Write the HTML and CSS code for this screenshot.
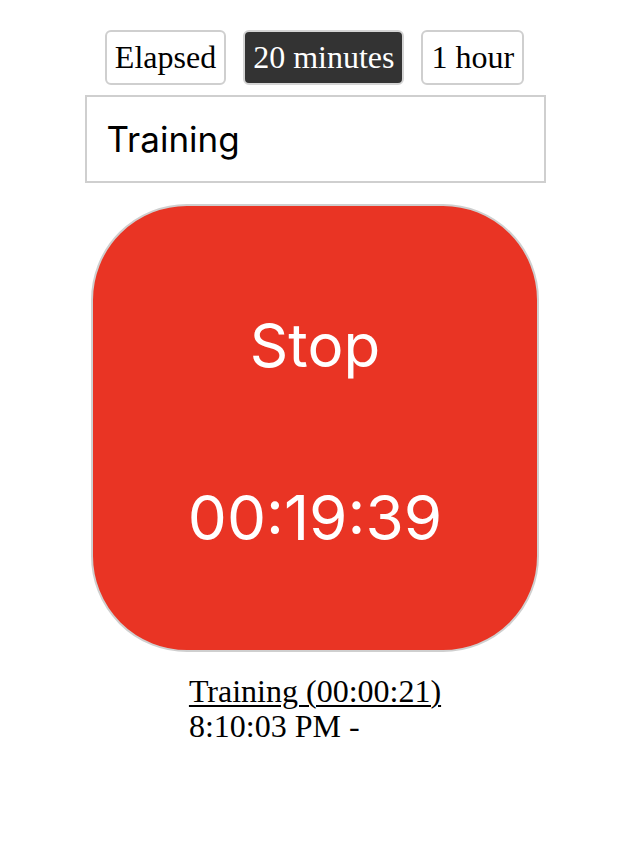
FILE: index.html
```html
<!DOCTYPE html>
<html>
<head>
<meta charset="utf-8">
<link rel="stylesheet" href="styles.css">
</head>
<body>
<div class="app">
  <div class="modes">
    <button class="mode">Elapsed</button>
    <button class="mode active">20 minutes</button>
    <button class="mode">1 hour</button>
  </div>
  <input class="task" type="text" value="Training">
  <button class="timer">
    <span class="label">Stop</span>
    <span class="clock">00:19:39</span>
  </button>
  <div class="log">
    <a class="entry" href="#">Training (00:00:21)</a>
    <div class="when">8:10:03 PM -</div>
  </div>
</div>
</body>
</html>
```
FILE: styles.css
```css
html, body {
  margin: 0;
  padding: 0;
  background: #fff;
}
.app {
  display: flex;
  flex-direction: column;
  align-items: center;
  padding-top: 30px;
  font-family: "Liberation Serif", serif;
  font-size: 32px;
  color: #000;
}
.modes {
  display: flex;
  gap: 17px;
  margin-left: -1px;
}
.mode {
  font-family: "Liberation Serif", serif;
  font-size: 32px;
  line-height: 35px;
  padding: 8px 8px;
  border: 2px solid #cfcfcf;
  border-radius: 6px;
  background: #fff;
  color: #000;
}
.mode.active {
  background: #333;
  color: #fff;
  border-color: #d4d4d4;
}
.task {
  box-sizing: border-box;
  width: 461px;
  height: 88px;
  margin-top: 10px;
  padding: 0 20px;
  border: 2px solid #cfcfcf;
  font-family: "Inter", "Liberation Sans", sans-serif;
  font-size: 35px;
  color: #000;
  outline: none;
}
.timer {
  box-sizing: border-box;
  width: 448px;
  height: 448px;
  margin-top: 21px;
  border: 2px solid #cfcfcf;
  border-radius: 96px;
  background: #e93424;
  color: #fff;
  display: flex;
  flex-direction: column;
  align-items: center;
  justify-content: flex-start;
  padding: 107px 0 0;
  gap: 109px;
  font-family: "Inter", "Liberation Sans", sans-serif;
}
.label, .clock {
  display: block;
  font-size: 60px;
  line-height: 64px;
}
.clock {
  font-size: 62px;
}
.log {
  margin-top: 22px;
  line-height: 35px;
  text-align: left;
}
.entry {
  color: #000;
  text-decoration: underline;
  text-decoration-thickness: 2px;
  text-underline-offset: 3px;
}
.when {
  color: #000;
}
```
